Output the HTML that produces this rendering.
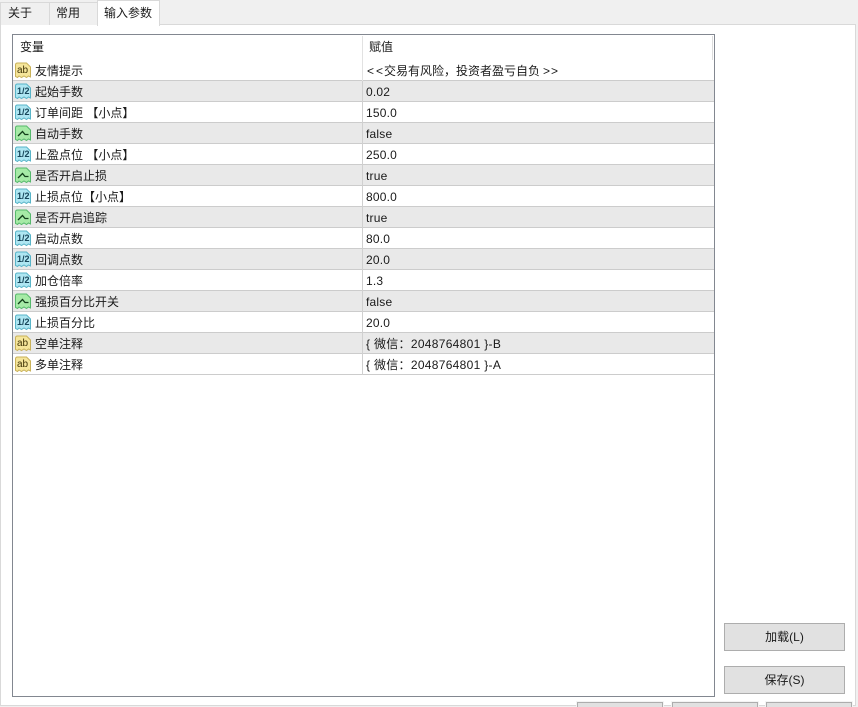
<!DOCTYPE html>
<html><head><meta charset="utf-8">
<style>
html,body{margin:0;padding:0;width:858px;height:707px;overflow:hidden;background:#f0f0f0;}
body{position:relative;font:12px/16px "Liberation Sans","Noto Sans CJK SC",sans-serif;color:#1a1a1a;}
div{position:absolute;box-sizing:border-box;white-space:nowrap;}
svg{position:absolute;left:2px;top:2px;}
.panel{left:0;top:24px;width:856px;height:682px;background:#fff;border:1px solid #d9d9d9;}
.tab{top:2px;height:23px;background:#f0f0f0;border:1px solid #d9d9d9;border-bottom:none;line-height:20px;padding-left:7px;}
.tb{left:12px;top:34px;width:703px;height:663px;background:#fff;border:1px solid #828790;}
.r{left:13px;width:701px;height:21px;border-bottom:1px solid #cccccc;}
.g{background:#e9e9e9;}
.n{left:22px;top:3px;}
.v{left:353px;top:3px;letter-spacing:.2px;}
.d{left:349px;top:0;width:1px;height:21px;background:#d0d0d0;}
.btn{background:#e1e1e1;border:1px solid #adadad;text-align:center;height:28px;line-height:27px;}
.i{font-family:"Liberation Sans",sans-serif;font-size:9px;font-weight:bold;fill:#17465a;}
.a{font-family:"Liberation Sans",sans-serif;font-size:10px;fill:#3f3306;}
</style></head><body>
<div class="panel"></div>
<div class="tab" style="left:0;width:50px;">关于</div>
<div class="tab" style="left:49px;width:49px;padding-left:6px;">常用</div>
<div class="tab" style="left:97px;top:0;width:63px;height:26px;background:#fff;line-height:24px;z-index:2;padding-left:6px;">输入参数</div>

<div class="tb"></div>
<div style="left:20px;top:39px;">变量</div>
<div style="left:369px;top:39px;">赋值</div>
<div style="left:362px;top:36px;width:1px;height:25px;background:#e2e2e2;"></div>
<div style="left:712px;top:36px;width:1px;height:24px;background:#dcdcdc;"></div>

<div class="r" style="top:60px;"><div class="d" style="background:#e2e2e2;"></div><svg width="17" height="17" viewBox="0 0 17 17"><path d="M.5 3Q.5 1 2.500 1H11.500L15.500 5V15L13.500 14L11.500 15.500L9 14L6.500 15.500L4 14L2.500 15.500L.5 14.500Z" fill="#f5e59a" stroke="#c9b25a"/><text x="2" y="11" class="a">ab</text></svg><div class="n">友情提示</div><div class="v" style="left:354px;letter-spacing:0;">&lt;</div><div class="v" style="left:363px;letter-spacing:0;">&lt;</div><div class="v" style="left:371px;letter-spacing:0;">交易有风险，投资者盈亏自负</div><div class="v" style="left:530px;letter-spacing:0;">&gt;</div><div class="v" style="left:538px;letter-spacing:0;">&gt;</div></div>

<div class="r g" style="top:81px;"><div class="d"></div><svg width="17" height="17" viewBox="0 0 17 17"><path d="M.5 3Q.5 1 2.500 1H11.500L15.500 5V15L13.500 14L11.500 15.500L9 14L6.500 15.500L4 14L2.500 15.500L.5 14.500Z" fill="#aee6f2" stroke="#58b4c8"/><text x="2" y="11" class="i">1/2</text></svg><div class="n">起始手数</div><div class="v">0.02</div></div>

<div class="r" style="top:102px;"><div class="d"></div><svg width="17" height="17" viewBox="0 0 17 17"><path d="M.5 3Q.5 1 2.500 1H11.500L15.500 5V15L13.500 14L11.500 15.500L9 14L6.500 15.500L4 14L2.500 15.500L.5 14.500Z" fill="#aee6f2" stroke="#58b4c8"/><text x="2" y="11" class="i">1/2</text></svg><div class="n">订单间距 【小点】</div><div class="v">150.0</div></div>

<div class="r g" style="top:123px;"><div class="d"></div><svg width="17" height="17" viewBox="0 0 17 17"><path d="M.5 3Q.5 1 2.500 1H11.500L15.500 5V15L13.500 14L11.500 15.500L9 14L6.500 15.500L4 14L2.500 15.500L.5 14.500Z" fill="#a6eaa6" stroke="#56b96c"/><path d="M3 11L7.500 6.500L10 9.500H13.500" fill="none" stroke="#123f1a" stroke-width="1.300"/></svg><div class="n">自动手数</div><div class="v">false</div></div>

<div class="r" style="top:144px;"><div class="d"></div><svg width="17" height="17" viewBox="0 0 17 17"><path d="M.5 3Q.5 1 2.500 1H11.500L15.500 5V15L13.500 14L11.500 15.500L9 14L6.500 15.500L4 14L2.500 15.500L.5 14.500Z" fill="#aee6f2" stroke="#58b4c8"/><text x="2" y="11" class="i">1/2</text></svg><div class="n">止盈点位 【小点】</div><div class="v">250.0</div></div>

<div class="r g" style="top:165px;"><div class="d"></div><svg width="17" height="17" viewBox="0 0 17 17"><path d="M.5 3Q.5 1 2.500 1H11.500L15.500 5V15L13.500 14L11.500 15.500L9 14L6.500 15.500L4 14L2.500 15.500L.5 14.500Z" fill="#a6eaa6" stroke="#56b96c"/><path d="M3 11L7.500 6.500L10 9.500H13.500" fill="none" stroke="#123f1a" stroke-width="1.300"/></svg><div class="n">是否开启止损</div><div class="v">true</div></div>

<div class="r" style="top:186px;"><div class="d"></div><svg width="17" height="17" viewBox="0 0 17 17"><path d="M.5 3Q.5 1 2.500 1H11.500L15.500 5V15L13.500 14L11.500 15.500L9 14L6.500 15.500L4 14L2.500 15.500L.5 14.500Z" fill="#aee6f2" stroke="#58b4c8"/><text x="2" y="11" class="i">1/2</text></svg><div class="n">止损点位【小点】</div><div class="v">800.0</div></div>

<div class="r g" style="top:207px;"><div class="d"></div><svg width="17" height="17" viewBox="0 0 17 17"><path d="M.5 3Q.5 1 2.500 1H11.500L15.500 5V15L13.500 14L11.500 15.500L9 14L6.500 15.500L4 14L2.500 15.500L.5 14.500Z" fill="#a6eaa6" stroke="#56b96c"/><path d="M3 11L7.500 6.500L10 9.500H13.500" fill="none" stroke="#123f1a" stroke-width="1.300"/></svg><div class="n">是否开启追踪</div><div class="v">true</div></div>

<div class="r" style="top:228px;"><div class="d"></div><svg width="17" height="17" viewBox="0 0 17 17"><path d="M.5 3Q.5 1 2.500 1H11.500L15.500 5V15L13.500 14L11.500 15.500L9 14L6.500 15.500L4 14L2.500 15.500L.5 14.500Z" fill="#aee6f2" stroke="#58b4c8"/><text x="2" y="11" class="i">1/2</text></svg><div class="n">启动点数</div><div class="v">80.0</div></div>

<div class="r g" style="top:249px;"><div class="d"></div><svg width="17" height="17" viewBox="0 0 17 17"><path d="M.5 3Q.5 1 2.500 1H11.500L15.500 5V15L13.500 14L11.500 15.500L9 14L6.500 15.500L4 14L2.500 15.500L.5 14.500Z" fill="#aee6f2" stroke="#58b4c8"/><text x="2" y="11" class="i">1/2</text></svg><div class="n">回调点数</div><div class="v">20.0</div></div>

<div class="r" style="top:270px;"><div class="d"></div><svg width="17" height="17" viewBox="0 0 17 17"><path d="M.5 3Q.5 1 2.500 1H11.500L15.500 5V15L13.500 14L11.500 15.500L9 14L6.500 15.500L4 14L2.500 15.500L.5 14.500Z" fill="#aee6f2" stroke="#58b4c8"/><text x="2" y="11" class="i">1/2</text></svg><div class="n">加仓倍率</div><div class="v">1.3</div></div>

<div class="r g" style="top:291px;"><div class="d"></div><svg width="17" height="17" viewBox="0 0 17 17"><path d="M.5 3Q.5 1 2.500 1H11.500L15.500 5V15L13.500 14L11.500 15.500L9 14L6.500 15.500L4 14L2.500 15.500L.5 14.500Z" fill="#a6eaa6" stroke="#56b96c"/><path d="M3 11L7.500 6.500L10 9.500H13.500" fill="none" stroke="#123f1a" stroke-width="1.300"/></svg><div class="n">强损百分比开关</div><div class="v">false</div></div>

<div class="r" style="top:312px;"><div class="d"></div><svg width="17" height="17" viewBox="0 0 17 17"><path d="M.5 3Q.5 1 2.500 1H11.500L15.500 5V15L13.500 14L11.500 15.500L9 14L6.500 15.500L4 14L2.500 15.500L.5 14.500Z" fill="#aee6f2" stroke="#58b4c8"/><text x="2" y="11" class="i">1/2</text></svg><div class="n">止损百分比</div><div class="v">20.0</div></div>

<div class="r g" style="top:333px;"><div class="d"></div><svg width="17" height="17" viewBox="0 0 17 17"><path d="M.5 3Q.5 1 2.500 1H11.500L15.500 5V15L13.500 14L11.500 15.500L9 14L6.500 15.500L4 14L2.500 15.500L.5 14.500Z" fill="#f5e59a" stroke="#c9b25a"/><text x="2" y="11" class="a">ab</text></svg><div class="n">空单注释</div><div class="v" style="letter-spacing:.3px;">{ 微信：2048764801 }-B</div></div>

<div class="r" style="top:354px;"><div class="d"></div><svg width="17" height="17" viewBox="0 0 17 17"><path d="M.5 3Q.5 1 2.500 1H11.500L15.500 5V15L13.500 14L11.500 15.500L9 14L6.500 15.500L4 14L2.500 15.500L.5 14.500Z" fill="#f5e59a" stroke="#c9b25a"/><text x="2" y="11" class="a">ab</text></svg><div class="n">多单注释</div><div class="v" style="letter-spacing:.3px;">{ 微信：2048764801 }-A</div></div>

<div class="btn" style="left:724px;top:623px;width:121px;">加载(L)</div>
<div class="btn" style="left:724px;top:666px;width:121px;">保存(S)</div>
<div class="btn" style="left:577px;top:702px;width:86px;box-shadow:0 0 0 1px #f4f4f4;"></div>
<div class="btn" style="left:672px;top:702px;width:86px;box-shadow:0 0 0 1px #f4f4f4;"></div>
<div class="btn" style="left:766px;top:702px;width:86px;box-shadow:0 0 0 1px #f4f4f4;"></div>
</body></html>
